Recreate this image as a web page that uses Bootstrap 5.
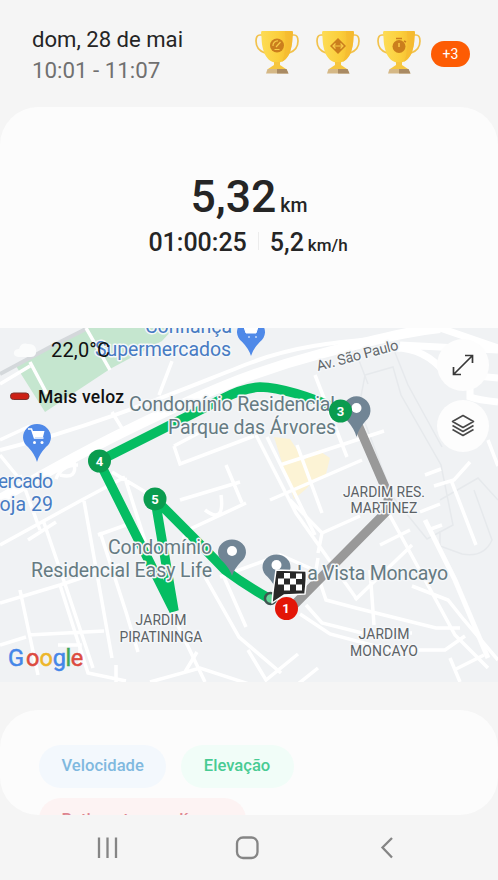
<!DOCTYPE html>
<html lang="pt-BR">
<head>
<meta charset="utf-8">
<meta name="viewport" content="width=device-width, initial-scale=1">
<title>Caminhada</title>
<link href="https://cdn.jsdelivr.net/npm/bootstrap@5.3.0/dist/css/bootstrap.min.css" rel="stylesheet">
<style>
body{font-family:Roboto,"Noto Sans",sans-serif;background:#f5f5f5;color:#252525;letter-spacing:0}
.screen{width:498px;height:880px}
.topbar{height:107px;padding:24px 28px 0 32px}
.date{font-size:22.1px;line-height:31px}
.hours{font-size:22.3px;line-height:31px;color:#707070}
.trophy{width:46px;height:48px;margin-right:15px}
.more{width:39px;height:26px;background:#fd5c04;font-size:14px;margin:13px 0 0 -6px}
.summary{height:221px;background:#fcfcfc;border-radius:38px 38px 0 0;padding-top:65px}
.dist{font-size:44.5px;line-height:50px;font-weight:500}
.dist small{font-size:19.5px;font-weight:500;margin-left:4px}
.stats{font-size:25px;line-height:30px;font-weight:500;margin:-3px 2px 0 0}
.stats small{font-size:17px;font-weight:500;margin-left:4px}
.rule{width:1px;height:18px;background:#ececec;margin:4px 11px 0}
.map-area{height:354px;margin-bottom:28px;background:#f0f2f4}
.tools{right:9px;top:11px;gap:9px}
.tool{width:52px;height:52px;background:#fdfdfd}
.chips{height:105px;background:#fcfcfc;border-radius:38px;padding:35px 39px 0;gap:10px 15px}
.chip{height:43px;font-size:16.6px;font-weight:500;padding:0 22.5px;border-radius:22px}
.c-speed{color:#80b9df;background:#f3f8fd}
.c-elev{color:#48cb93;background:#f1fdf8;padding-right:24px}
.c-heart{color:#dd8590;background:#fdf3f3;padding-top:2px}
.sysnav{height:65px}
svg text{font-family:Roboto,"Noto Sans",sans-serif}
.halo{paint-order:stroke;stroke:#f5f7f9;stroke-width:3px;stroke-linejoin:round}
</style>
<script src="https://cdn.jsdelivr.net/npm/bootstrap@5.3.0/dist/js/bootstrap.bundle.min.js"></script>
</head>
<body>
<svg width="0" height="0" class="position-absolute">
<defs>
<linearGradient id="gold"><stop offset="0" stop-color="#fddc55"/><stop offset=".55" stop-color="#fbcf3c"/><stop offset="1" stop-color="#f4b62c"/></linearGradient>
<g id="cup">
<path d="M9 7H6Q2 7 2 13Q2 22 11 25M37 7h3q4 0 4 6q0 9-9 12" fill="none" stroke="#f2c24c" stroke-width="1.700"/>
<path d="M8 3h30q1 0 1 2c-1 5 0 11-3 19c-2 6-6 10-13 11c-7-1-11-5-13-11C7 16 8 10 7 5q0-2 1-2z" fill="url(#gold)"/>
<path d="M31 3h7q1 0 1 2c-1 5 0 11-3 19c-2 5-5 8-8 10q5-12 3-31z" fill="#f5bb31" opacity=".7"/>
<path d="M20 34h6v3l6 4H14l6-4z" fill="#f6c63f"/>
<path d="M13.500 41h19l2 4.500H12z" fill="#d5b886"/><path d="M23 41h9.500l2 4.500H23z" fill="#a98a63"/>
</g>
<g id="pin"><path d="M0 29Q-2 21-9 13A14 14 0 1 1 9 13Q2 21 0 29z"/></g>
</defs>
</svg>
<main class="screen d-flex flex-column overflow-hidden">
<header class="topbar d-flex justify-content-between">
<div><div class="date">dom, 28 de mai</div><div class="hours">10:01 - 11:07</div></div>
<div class="d-flex pt-1">
<svg class="trophy" viewBox="0 0 46 48"><use href="#cup"/><circle cx="23" cy="17.500" r="7" fill="#cb7e1d"/><path d="M19 18a4.500 4.500 0 0 1 5-5M22 19l4.500-5M20.500 21.500h5" stroke="#f8cb48" stroke-width="1.200" fill="none"/></svg>
<svg class="trophy" viewBox="0 0 46 48"><use href="#cup"/><path d="M23 10l8 8-8 8-8-8z" fill="#cb7e1d"/><path d="M20.500 15.500L18 18l2.500 2.500M25.500 15.500L28 18l-2.500 2.500M18 18h10" fill="none" stroke="#f8cb48" stroke-width="1.200"/></svg>
<svg class="trophy" viewBox="0 0 46 48"><use href="#cup"/><circle cx="23" cy="18.500" r="6.500" fill="#cb7e1d"/><path d="M20 10.500h6M28 13l2 1" stroke="#cb7e1d" stroke-width="1.600"/><path d="M23 15v4" stroke="#f8cb48" stroke-width="1.500"/></svg>
<span class="more rounded-pill text-white d-flex align-items-center justify-content-center">+3</span>
</div>
</header>
<section class="summary text-center">
<div class="dist">5,32<small>km</small></div>
<div class="stats d-flex justify-content-center"><span>01:00:25</span><i class="rule"></i><span>5,2<small>km/h</small></span></div>
</section>
<section class="map-area position-relative overflow-hidden flex-shrink-0">
<svg class="d-block" width="498" height="354" viewBox="0 328 498 354">
<!-- parks and blocks -->
<path d="M16 366L84 328h90l-12 13-52 28-65 43z" fill="#c5e6cf"/>
<path d="M274 437l16 2 14 21 14-10 12 8-5 20-12 3-7 8-12 10-10-30z" fill="#fcf3d5"/>
<path d="M0 374L52 346 88 328" stroke="#d4d8db" stroke-width="4" fill="none"/>
<!-- minor outlines -->
<g fill="none" stroke="#e6e9ec" stroke-width="1.500">
<path d="M365 375l28-8 8 28 40 70 12 60-26 14-34-42-34-90zM355 350l13 34M388 335l20 50 34 62M440 500l38-22 20 22M474 490l18 50q-8 18-30 14l-22-8v-15"/>
</g>
<g fill="none" stroke="#fff" stroke-linecap="butt">
<!-- main avenue -->
<path d="M0 499C50 470 90 448 140 424S240 375 320 354S420 330 440 328" stroke-width="10"/>
<path d="M0 450C100 425 180 390 250 363S390 342 420 332" stroke-width="4"/>
<path d="M400 345L498 350M395 348q30 0 50 25l53 5M440 328l58 20M470 385v12q8 3 28 5" stroke-width="7"/>
<path d="M56 479q5-14 22-14M60 475q18 5 14-13" stroke-width="3.500"/>
<g stroke-width="3.500">
<path d="M0 384l30-18M30 362l17 32M86 328l24 42M0 440l30-14M0 455l18 22M172 361l-13 34M112 412l11 18"/>
<path d="M174 446l38-20M174 446l6 18 74-28M226 465l16 38M315 375l32 82M267 437l48 98M280 465l104-34M297 445l25 68M270 500L362 460"/>
<path d="M256 435l40 78 60 85M290 500l32 33 38-17M322 533l-4 20"/>
<path d="M246 503l-60 28-6 20M180 500l60-18M205 510q20 15 16-15"/>
<path d="M112 472l40 24M0 545l80-44 45-24M84 501l28 157M43 520l24 70 26 78M20 475l20 55M0 603l60-18 60-20M20 590l18 85M28 540l28-18M60 585l28 88 38 8M100 532l26 80 12 40M125 478l35 110 45 94M98 535l28-10M28 635l76-4M0 645l26-8M58 645l22 0v20M116 665l0 18"/>
<path d="M205 577l34 60 42 36M224 577l22 50M220 577l60-22 32 14"/>
<path d="M318 558l-2 12 10 30 30 8 80 20 24 0M306 605l16 18 40 10 50 0M370 570l4 55M355 600L412 545M388 512l30 55 37 68 33 33M420 512l20-8M428 530l14-5M380 545l30-15M412 586l36 14 16 20 34 40M300 614l30 20 60 16 55 0 20-14M454 670l30-15M450 658l10 24"/>
<path d="M248 650l18 30 32-26M298 684l20-16M150 682l50-14 55 18M185 672l12-20M425 475l16-6M434 486l20-6 16-18M451 480l25 65M488 440l10 26"/>
</g>
<path d="M425 520l30 60 33 78" stroke-width="5"/>
</g>
<!-- shop pins -->
<use href="#pin" transform="translate(251 330) scale(1 .9)" fill="#4f89e8"/>
<path d="M244 327h14l-2 6h-10zM248 337h2m5 0h2" fill="#fff" stroke="#fff"/>
<use href="#pin" transform="translate(37 435) scale(1 .93)" fill="#4f89e8"/>
<path d="M28 429h3.500l3 9h9" fill="none" stroke="#fff" stroke-width="1.500"/><path d="M32 431h12.500l-1.500 6h-9z" fill="#fff"/><circle cx="34.500" cy="442.500" r="1.500" fill="#fff"/><circle cx="42" cy="442.500" r="1.500" fill="#fff"/>
<!-- route -->
<path d="M356 420L388 494V510L290 609" fill="none" stroke="#999" stroke-width="9"/>
<path d="M340 410Q290 388 260 387Q243 388 222 399L99 461L174 611L155 499Q205 549 225 570Q245 585 270 599" fill="none" stroke="#05bd62" stroke-width="9.500" stroke-linejoin="bevel"/>
<g fill="#718595"><use href="#pin" transform="translate(356.500 408)"/><use href="#pin" transform="translate(232 550) scale(1 .9)"/><use href="#pin" transform="translate(276.500 565) scale(1 .9)"/></g>
<g fill="#fff"><circle cx="356.500" cy="408" r="5"/><circle cx="232" cy="551" r="5"/><circle cx="276.500" cy="565" r="5"/></g>
<!-- place labels -->
<g class="halo" font-size="19.500" fill="#477bc3">
<text x="145" y="333" textLength="87">Confiança</text>
<text x="95" y="356" textLength="136">Supermercados</text>
<text x="-18" y="488" textLength="71">Mercado</text>
<text x="-11" y="511" textLength="64">Loja 29</text>
</g>
<g class="halo" font-size="19.500" fill="#667b82">
<text x="129" y="411" textLength="206">Condomínio Residencial</text>
<text x="168" y="434" textLength="168">Parque das Árvores</text>
<text x="108" y="554" textLength="104">Condomínio</text>
<text x="31" y="577" textLength="181">Residencial Easy Life</text>
<text x="297" y="580" textLength="151">La Vista Moncayo</text>
</g>
<g class="halo" font-size="14" fill="#5c6266" text-anchor="middle">
<text x="384" y="497" textLength="82">JARDIM RES.</text><text x="384" y="513" textLength="67">MARTINEZ</text>
<text x="161" y="625" textLength="51">JARDIM</text><text x="161" y="642" textLength="83">PIRATININGA</text>
<text x="384" y="639" textLength="51">JARDIM</text><text x="384" y="656" textLength="68">MONCAYO</text>
</g>
<text class="halo" font-size="14.500" fill="#62676b" textLength="84" transform="translate(318 371) rotate(-15)">Av. São Paulo</text>
<!-- kilometre markers -->
<g font-size="13" font-weight="700" fill="#fff" text-anchor="middle">
<circle cx="340.500" cy="411" r="11.500" fill="#0a9c4f"/><text x="340.500" y="415.500">3</text>
<circle cx="99.500" cy="461" r="11.500" fill="#0a9c4f"/><text x="99.500" y="465.500">4</text>
<circle cx="155" cy="499" r="11.500" fill="#0a9c4f"/><text x="155" y="503.500">5</text>
</g>
<circle cx="270.500" cy="598.500" r="5.500" fill="#65d49a" stroke="#3e5550" stroke-width="2.500"/>
<path d="M276 570l30 1q1 6-1 23l-21 1-12 8 1-11z" fill="#282828" stroke="#fff" stroke-width="1.500" stroke-linejoin="round"/>
<g fill="#fff"><path d="M284 573h6v5.500h-6zM296 573.500h6v5.500h-6zM278 578.500h6v6h-6zM290 578.500h6v6h-6zM284 584.500h6v6h-6zM296 584.500h6v6h-6z"/></g>
<circle cx="286.500" cy="608.500" r="11.500" fill="#e31507"/><text x="286" y="613" font-size="13" font-weight="700" fill="#fff" text-anchor="middle">1</text>
<!-- weather and legend -->
<path d="M18 357q-5-1-4-5 1-3 5-3 2-7 9-5 7 0 8 5 1 8-5 8z" fill="#fbfcfc"/>
<text x="51" y="357" font-size="20" fill="#111" textLength="59">22,0°C</text>
<rect x="10.500" y="393" width="18.500" height="6.500" rx="3" fill="#cc2015" stroke="#7c302b" stroke-width="1"/>
<text x="38" y="403" font-size="17.500" font-weight="500" fill="#111" textLength="86">Mais veloz</text>
<text y="665.500" font-size="23.500" stroke-width=".5"><tspan x="8" fill="#4486e8" stroke="#4486e8">G</tspan><tspan x="26" fill="#dc4b40" stroke="#dc4b40">o</tspan><tspan x="39.500" fill="#edb62a" stroke="#edb62a">o</tspan><tspan x="52.800" fill="#4486e8" stroke="#4486e8">g</tspan><tspan x="65.500" fill="#40a65a" stroke="#40a65a">l</tspan><tspan x="70.800" fill="#dc4b40" stroke="#dc4b40">e</tspan></text>
</svg>
<div class="tools position-absolute d-flex flex-column">
<div class="tool rounded-circle d-flex align-items-center justify-content-center"><svg width="24" height="24" viewBox="0 0 24 24" fill="none" stroke="#383838" stroke-width="1.700"><path d="M3 21L21 3M14 2.500h7.500V10M2.500 14v7.500H10"/></svg></div>
<div class="tool rounded-circle d-flex align-items-center justify-content-center"><svg width="26" height="26" viewBox="0 0 26 26" fill="none" stroke="#484848" stroke-width="1.600" stroke-linejoin="round"><path d="M13 2.500l10.500 6L13 14.500 2.500 8.500zM2.500 12.500L13 18.500l10.500-6M2.500 16.500L13 22.500l10.500-6"/></svg></div>
</div>
</section>
<section class="chips d-flex flex-wrap align-content-start overflow-hidden flex-shrink-0">
<span class="chip c-speed d-flex align-items-center">Velocidade</span>
<span class="chip c-elev d-flex align-items-center">Elevação</span>
<span class="chip c-heart d-flex align-items-center">Batimentos cardíacos</span>
</section>
<nav class="sysnav flex-shrink-0">
<svg class="d-block" width="498" height="65" viewBox="0 815 498 65" fill="none" stroke="#858585" stroke-width="2.300"><path d="M99 837.500v20.500M107.500 837.500v20.500M116 837.500v20.500"/><rect x="237" y="837.500" width="20.500" height="20.500" rx="6"/><path d="M392 838l-9.500 9.500 9.500 10"/></svg>
</nav>
</main>
</body>
</html>
